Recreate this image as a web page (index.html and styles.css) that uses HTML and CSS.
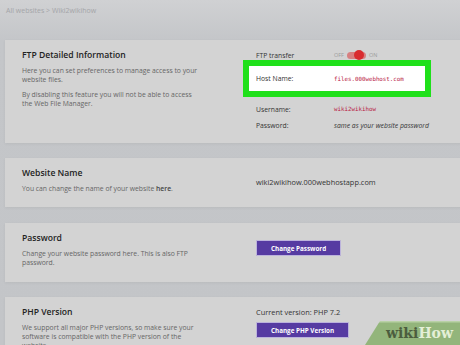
FILE: index.html
```html
<!DOCTYPE html>
<html lang="en">
<head>
  <meta charset="UTF-8" />
  <title>Wiki2wikihow - Settings</title>
  <link rel="stylesheet" href="styles.css">
</head>
<body>
  <div class="page">
    <div class="crumbs">All websites &gt; Wiki2wikihow</div>

    <div class="card ftp">
      <div class="info">
        <h2>FTP Detailed Information</h2>
        <p>Here you can set preferences to manage access to your website files.</p>
        <p>By disabling this feature you will not be able to access the Web File Manager.</p>
      </div>
      <div class="side">
        <div class="row">
          <span class="label">FTP transfer</span>
          <span class="switch">
            <span class="off">OFF</span>
            <span class="track"><span class="knob"></span></span>
            <span class="on">ON</span>
          </span>
        </div>
        <div class="row highlight">
          <span class="label">Host Name:</span>
          <span class="mono">files.000webhost.com</span>
        </div>
        <div class="row tall">
          <span class="label">Username:</span>
          <span class="mono">wiki2wikihow</span>
        </div>
        <div class="row tall">
          <span class="label">Password:</span>
          <span class="note">same as your website password</span>
        </div>
      </div>
    </div>

    <div class="card site">
      <div class="info">
        <h2>Website Name</h2>
        <p>You can change the name of your website <b>here</b>.</p>
      </div>
      <div class="side">
        <span class="value">wiki2wikihow.000webhostapp.com</span>
      </div>
    </div>

    <div class="card pass">
      <div class="info">
        <h2>Password</h2>
        <p>Change your website password here. This is also FTP password.</p>
      </div>
      <div class="side">
        <button class="btn">Change Password</button>
      </div>
    </div>

    <div class="card php">
      <div class="info">
        <h2>PHP Version</h2>
        <p>We support all major PHP versions, so make sure your software is compatible with the PHP version of the website.</p>
      </div>
      <div class="side">
        <div class="value current">Current version: PHP 7.2</div>
        <button class="btn">Change PHP Version</button>
      </div>
    </div>
  </div>

  <div class="wikihow"><span class="wiki">wiki</span><span class="how">How</span></div>
</body>
</html>
```

FILE: styles.css
```css
* {
  box-sizing: border-box;
}
body {
  margin: 0;
  width: 460px;
  height: 345px;
  overflow: hidden;
  font-family: 'Open Sans', 'Noto Sans', sans-serif;
  color: #333;
  background: linear-gradient(to bottom, #d0d1d3 0, #c4c6c9 40px, #c3c5c8 100%);
}
.page {
  padding: 5px 0 0 5px;
  width: 480px;
}
.crumbs {
  font-size: 7px;
  line-height: 12px;
  color: #a4a5a8;
  padding-left: 1px;
  height: 35px;
}
.card {
  display: grid;
  grid-template-columns: 234px 1fr;
  align-items: start;
  background: #d3d3d3;
  padding: 9px 0 0 17px;
  margin-bottom: 15px;
  box-shadow: 0 1px 3px rgba(0, 0, 0, 0.06);
}
.ftp { height: 103px; }
.site { height: 49px; margin-bottom: 16px; }
.pass { height: 59px; }
.php { height: 70px; }

h2 {
  margin: 0 0 5px;
  font-size: 8.6px;
  line-height: 12px;
  font-weight: 600;
  color: #222;
}
.info p {
  margin: 0 0 6px;
  width: 178px;
  font-size: 6.8px;
  line-height: 9px;
  color: #666;
}
.info p:last-child {
  margin-bottom: 0;
}
.info b {
  font-weight: 600;
  color: #444;
}
.side {
  font-size: 6.8px;
  color: #333;
}
.site .side {
  padding-top: 11px;
}
.pass .side {
  padding-top: 8px;
}
.row {
  display: flex;
  align-items: center;
  height: 12px;
}
.row.tall {
  height: 16px;
}
.label {
  width: 78px;
  flex: none;
}
.highlight {
  height: 25px;
  margin: 5px 0 10px -7px;
  width: 176px;
  padding-left: 7px;
  background: #fff;
  outline: 6px solid #1fe01a;
}
.mono {
  font-family: 'DejaVu Sans Mono', 'Liberation Mono', monospace;
  font-size: 5.8px;
  color: #b8173f;
}
.note {
  font-style: italic;
  color: #333;
}
.switch {
  display: flex;
  align-items: center;
  gap: 3px;
  font-size: 5.5px;
  color: #9c9c9c;
}
.track {
  position: relative;
  width: 19px;
  height: 7px;
  border-radius: 4px;
  background: #d77f80;
}
.knob {
  position: absolute;
  right: 2px;
  top: -1.5px;
  width: 10px;
  height: 10px;
  border-radius: 50%;
  background: #d92b2f;
}
.value {
  font-size: 7.4px;
  line-height: 9px;
  color: #333;
}
.current {
  line-height: 12px;
  margin-bottom: 4px;
}
.btn {
  display: block;
  height: 16px;
  padding: 0 14px;
  border: 1px solid #bcb3dc;
  border-radius: 1px;
  background: #563ba2;
  color: #fff;
  font-family: 'Open Sans', 'Noto Sans', sans-serif;
  font-size: 6.3px;
  font-weight: 700;
  cursor: pointer;
}
.wikihow {
  position: absolute;
  left: 360px;
  top: 321px;
  width: 100px;
  height: 24px;
  padding-left: 26px;
  background: linear-gradient(to bottom, #b9d1a6 0, #b9d1a6 1px, #93b57b 2px);
  clip-path: polygon(20px 0, 100% 0, 100% 100%, 5px 100%);
  font-family: 'DejaVu Serif', 'Liberation Serif', serif;
  font-weight: 700;
  font-size: 14px;
  line-height: 24px;
  white-space: nowrap;
}
.wiki {
  color: #4c5d3e;
}
.how {
  color: #e4efd7;
}
```
